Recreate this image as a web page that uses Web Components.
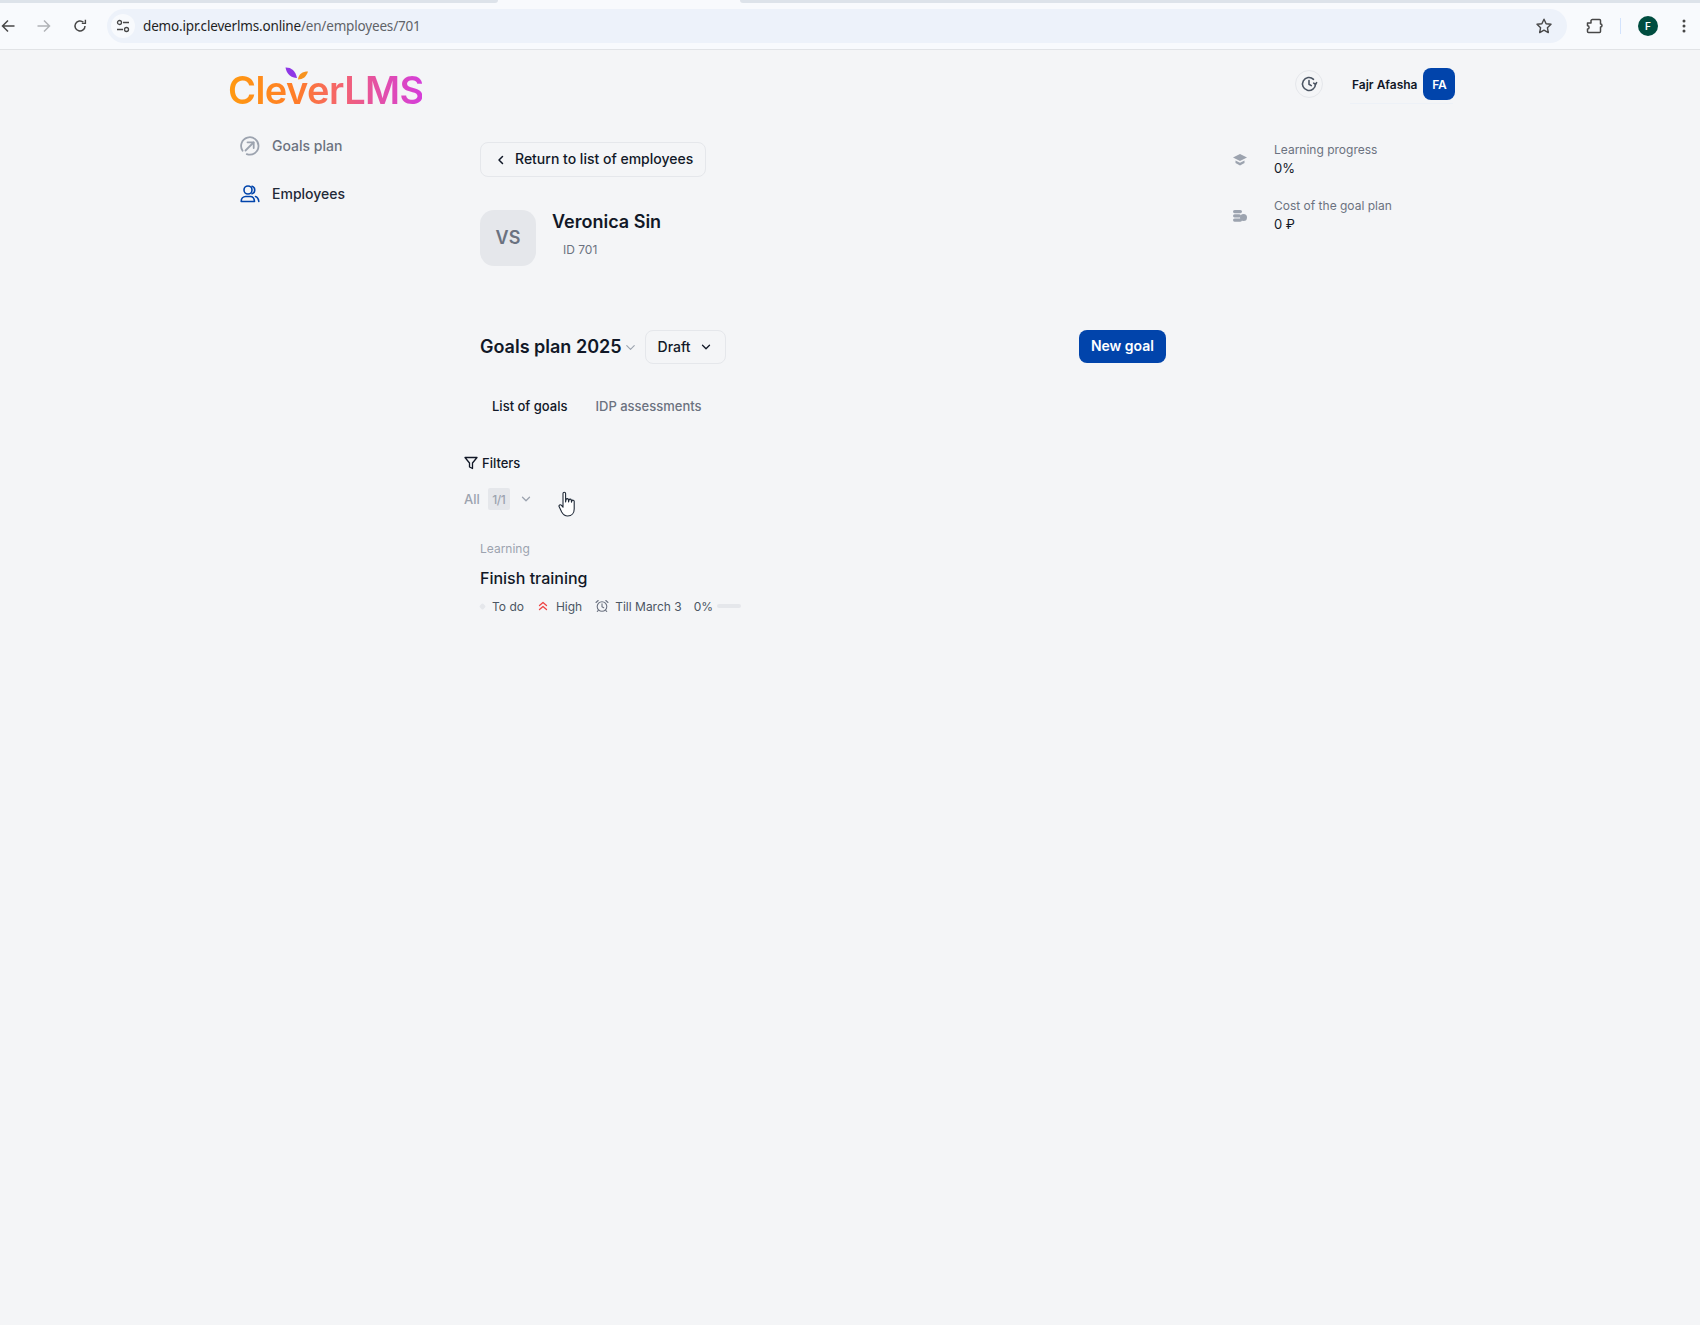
<!DOCTYPE html>
<html lang="en">
<head>
<meta charset="utf-8">
<title>CleverLMS</title>
<style>
  html, body { margin: 0; height: 100%; background: #f4f5f7; }
  body { font-family: Inter, "Liberation Sans", sans-serif; color: #111827; }
</style>
</head>
<body>
<browser-bar url="demo.ipr.cleverlms.online/en/employees/701"></browser-bar>
<app-page>
  <clever-logo slot="logo"></clever-logo>
  <user-menu slot="user" name="Fajr Afasha" initials="FA"></user-menu>

  <side-nav slot="nav">
    <nav-item icon="goals">Goals plan</nav-item>
    <nav-item icon="people" active>Employees</nav-item>
  </side-nav>

  <back-button>Return to list of employees</back-button>
  <employee-head name="Veronica Sin" initials="VS" code="ID 701"></employee-head>
  <plan-head title="Goals plan 2025" status="Draft" action="New goal"></plan-head>
  <goal-tabs></goal-tabs>
  <goal-filters></goal-filters>
  <goal-card kind="Learning" name="Finish training"></goal-card>

  <stat-item slot="aside" icon="cap" label="Learning progress" value="0%"></stat-item>
  <stat-item slot="aside" icon="coins" label="Cost of the goal plan" value="0 ₽"></stat-item>
</app-page>

<script>
  const chevron = (size, color, width = 1.5) => `
    <svg width="${size}" height="${size}" viewBox="0 0 16 16" fill="none" stroke="${color}" stroke-width="${width}" stroke-linecap="round" stroke-linejoin="round"><path d="M4 6l4 4 4-4"/></svg>`;

  class BrowserBar extends HTMLElement {
    constructor() {
      super();
      this.shadowDOM = this.attachShadow({ mode: 'open' });
    }

    connectedCallback() {
      this.shadowDOM.innerHTML = `
        <style>
          :host {
            display: block;
            height: 50px;
            box-sizing: border-box;
            background: #f8fafd;
            border-bottom: 1px solid #e1e3e6;
            font-family: "Noto Sans", "Liberation Sans", sans-serif;
          }
          .tabs {
            display: flex;
            height: 3px;
          }
          .tabs i {
            background: #dde3ea;
            flex: 0 0 498px;
            border-bottom-right-radius: 6px;
          }
          .tabs i + b { flex: 0 0 242px; }
          .tabs i:last-child {
            flex: 1;
            border-bottom-right-radius: 0;
            border-bottom-left-radius: 6px;
          }
          .row {
            display: flex;
            align-items: center;
            height: 34px;
            margin-top: 6px;
          }
          .nav {
            display: flex;
            align-items: center;
            flex: 0 0 107px;
          }
          .pill {
            flex: 0 0 1460px;
            height: 34px;
            display: flex;
            align-items: center;
            box-sizing: border-box;
            background: #edf2fa;
            border-radius: 17px;
            padding: 0 14px 0 4px;
          }
          .tune {
            width: 24px;
            height: 24px;
            border-radius: 50%;
            background: #f8fafd;
            display: flex;
            align-items: center;
            justify-content: center;
            margin-right: 8px;
          }
          .url {
            font-size: 13.5px;
            letter-spacing: -0.17px;
            color: #5f6368;
            flex: 1;
          }
          .url b { font-weight: 400; color: #1f1f1f; }
          .tools {
            display: flex;
            align-items: center;
            flex: 1;
          }
          .sep {
            width: 1px;
            height: 16px;
            background: #d3e3fd;
            margin: 0 17px 0 17px;
          }
          .profile {
            width: 20px;
            height: 20px;
            border-radius: 50%;
            background: #004d40;
            color: #fff;
            font: 600 10px Inter, sans-serif;
            display: flex;
            align-items: center;
            justify-content: center;
          }
        </style>
        <div class="tabs"><i></i><b></b><i></i></div>
        <div class="row">
          <div class="nav">
            <svg style="margin-left:1px" width="14" height="14" viewBox="0 0 14 14" fill="none" stroke="#474747" stroke-width="1.5"><path d="M13.5 7H2M7 1.5L1.5 7 7 12.5"/></svg>
            <svg style="margin-left:22px" width="14" height="14" viewBox="0 0 14 14" fill="none" stroke="#b0b3b7" stroke-width="1.5"><path d="M.5 7H12M7 1.5L12.5 7 7 12.5"/></svg>
            <svg style="margin-left:22px" width="14" height="14" viewBox="0 0 14 14" fill="none" stroke="#474747" stroke-width="1.5"><path d="M12 7a5 5 0 1 1-1.6-3.7"/><path d="M12.4 .8v3.6H8.8" stroke-width="1.4"/></svg>
          </div>
          <div class="pill">
            <span class="tune">
              <svg width="14" height="14" viewBox="0 0 14 14" fill="none" stroke="#474747" stroke-width="1.3"><circle cx="3.5" cy="3.5" r="2"/><path d="M7 3.5h6M1 10.5h6"/><circle cx="10.5" cy="10.5" r="2"/></svg>
            </span>
            <span class="url">${this.styledUrl()}</span>
            <svg width="18" height="18" viewBox="0 0 18 18" fill="none" stroke="#474747" stroke-width="1.4" stroke-linejoin="round"><path d="M9 2.2l2.1 4.5 4.9.6-3.6 3.4.9 4.9L9 13.2l-4.3 2.4.9-4.9L2 7.3l4.9-.6z"/></svg>
          </div>
          <div class="tools">
            <svg style="margin-left:18px" width="18" height="18" viewBox="0 0 18 18" fill="none" stroke="#474747" stroke-width="1.5" stroke-linejoin="round"><path d="M2.5 6H6V3.5A1.5 1.5 0 0 1 7.5 2.5H14.5a1 1 0 0 1 1 1V7a1.4 1.4 0 0 1 0 3v4.5a1 1 0 0 1-1 1H3.5a1 1 0 0 1-1-1V12a1.6 1.6 0 0 0 0-3.2z"/></svg>
            <span class="sep"></span>
            <span class="profile">F</span>
            <svg style="margin-left:24px" width="4" height="14" viewBox="0 0 4 14" fill="#474747"><circle cx="2" cy="2" r="1.5"/><circle cx="2" cy="7" r="1.5"/><circle cx="2" cy="12" r="1.5"/></svg>
          </div>
        </div>
      `;
    }

    styledUrl() {
      const url = this.getAttribute('url');
      const cut = url.indexOf('/');
      return `<b>${url.slice(0, cut)}</b>${url.slice(cut)}`;
    }
  }

  class CleverLogo extends HTMLElement {
    constructor() {
      super();
      this.shadowDOM = this.attachShadow({ mode: 'open' });
    }

    connectedCallback() {
      this.shadowDOM.innerHTML = `
        <style>
          :host {
            display: block;
            position: relative;
            width: 193px;
            height: 46px;
          }
          .word {
            display: block;
            font: 600 38px/46px Inter, sans-serif;
            letter-spacing: -0.55px;
            white-space: nowrap;
            margin-left: -1px;
            background: linear-gradient(90deg, #ff9a10 0%, #ff7d28 35%, #f4646f 58%, #e350a8 78%, #d53ed9 100%);
            -webkit-background-clip: text;
            background-clip: text;
            color: transparent;
          }
          svg {
            position: absolute;
            left: 56px;
            top: 0;
          }
        </style>
        <span class="word">CleverLMS</span>
        <svg width="24" height="14" viewBox="0 0 24 14">
          <path d="M.5 .5C6 .3 10.5 3.5 12 11 6.500 11 1.500 7 .5 .5z" fill="#8f37e6"/>
          <path d="M13 12.500C13.500 7 17.500 4.500 23 4.500 21.500 9.500 18 12.500 13 12.500z" fill="#f7931e"/>
        </svg>
      `;
    }
  }

  class UserMenu extends HTMLElement {
    constructor() {
      super();
      this.shadowDOM = this.attachShadow({ mode: 'open' });
    }

    connectedCallback() {
      this.shadowDOM.innerHTML = `
        <style>
          :host {
            display: flex;
            align-items: center;
            white-space: nowrap;
          }
          .history {
            flex: none;
            width: 28px;
            height: 28px;
            box-sizing: border-box;
            border: 1px solid #e5e7eb;
            border-radius: 50%;
            display: flex;
            align-items: center;
            justify-content: center;
            margin-right: 29px;
          }
          .who {
            position: relative;
            display: flex;
            align-items: center;
            gap: 6px;
          }
          .who::after {
            content: "";
            position: absolute;
            left: -2px;
            right: 2px;
            bottom: -4px;
            height: 1px;
            background: #edf1f7;
          }
          .name {
            font-size: 12px;
            font-weight: 600;
            color: #111827;
          }
          .badge {
            flex: none;
            width: 32px;
            height: 32px;
            border-radius: 8px;
            background: #0144ab;
            color: #fff;
            font-size: 12px;
            font-weight: 600;
            display: flex;
            align-items: center;
            justify-content: center;
          }
        </style>
        <span class="history">
          <svg width="18" height="18" viewBox="0 0 18 18" fill="none" stroke="#4b5563" stroke-width="1.6" stroke-linecap="round" stroke-linejoin="round">
            <path d="M15.500 9A6.500 6.500 0 1 1 13.500 4.300"/><path d="M16.600 7.600L15.500 9.400 13.700 8.200"/><path d="M9 5.500V9.300l2.300 1.300"/>
          </svg>
        </span>
        <span class="who">
          <span class="name">${this.getAttribute('name')}</span>
          <span class="badge">${this.getAttribute('initials')}</span>
        </span>
      `;
    }
  }

  class SideNav extends HTMLElement {
    constructor() {
      super();
      this.attachShadow({ mode: 'open' }).innerHTML = `
        <style>
          :host {
            display: flex;
            flex-direction: column;
            gap: 24px;
            padding: 0 0 0 11px;
          }
        </style>
        <slot></slot>
      `;
    }
  }

  const navIcons = {
    goals: `<svg width="20" height="20" viewBox="0 0 20 20" fill="none" stroke="#9ca3af" stroke-width="1.8" stroke-linecap="round" stroke-linejoin="round">
        <path d="M2.600 14.800A8.700 8.700 0 1 1 6.800 18.100"/><path d="M5.500 14.500L13.500 6.500"/><path d="M7.500 6.300h6.200V12"/></svg>`,
    people: `<svg width="20" height="20" viewBox="0 0 20 20" fill="none" stroke="#0144ab" stroke-width="1.6" stroke-linecap="round" stroke-linejoin="round">
        <circle cx="8" cy="6" r="4"/><path d="M1.200 17.500c0-3 2-5 4.500-5h4.600c2.500 0 4 1.700 4.200 5z"/><path d="M12 2.200a4 4 0 0 1 0 7.600"/><path d="M15.500 12.500c2 .6 3 2.500 3.300 5"/></svg>`
  };

  class NavItem extends HTMLElement {
    constructor() {
      super();
      this.shadowDOM = this.attachShadow({ mode: 'open' });
    }

    connectedCallback() {
      this.shadowDOM.innerHTML = `
        <style>
          :host {
            display: flex;
            align-items: center;
            gap: 12px;
            height: 24px;
            font-size: 14px;
            font-weight: 500;
            color: #6b7280;
          }
          :host([active]) { color: #1f2937; }
          span { display: block; margin-top: -2px; }
        </style>
        ${navIcons[this.getAttribute('icon')]}
        <span><slot></slot></span>
      `;
    }
  }

  class BackButton extends HTMLElement {
    constructor() {
      super();
      this.attachShadow({ mode: 'open' }).innerHTML = `
        <style>
          :host {
            display: inline-flex;
            align-items: center;
            align-self: flex-start;
            height: 35px;
            box-sizing: border-box;
            padding: 0 12px 0 12px;
            gap: 8px;
            border: 1px solid #e5e7eb;
            border-radius: 8px;
            font-size: 14px;
            font-weight: 500;
            color: #111827;
          }
          span { display: block; margin-top: -2px; }
        </style>
        <svg style="margin-left:1px;margin-right:-1px" width="14" height="14" viewBox="0 0 14 14" fill="none" stroke="#111827" stroke-width="1.500" stroke-linecap="round" stroke-linejoin="round"><path d="M8.500 3.500L5 7l3.500 3.500"/></svg>
        <span><slot></slot></span>
      `;
    }
  }

  class EmployeeHead extends HTMLElement {
    constructor() {
      super();
      this.shadowDOM = this.attachShadow({ mode: 'open' });
    }

    connectedCallback() {
      this.shadowDOM.innerHTML = `
        <style>
          :host {
            display: flex;
            gap: 16px;
            margin-top: 33px;
          }
          .avatar {
            width: 56px;
            height: 56px;
            box-sizing: border-box;
            padding-bottom: 2px;
            border-radius: 14px;
            background: #e5e7eb;
            color: #6b7280;
            font-size: 18px;
            font-weight: 600;
            display: flex;
            align-items: center;
            justify-content: center;
          }
          .name {
            font-size: 18px;
            line-height: 24px;
            font-weight: 600;
            color: #111827;
          }
          .code {
            margin: 8px 0 0 11px;
            font-size: 12px;
            line-height: 16px;
            color: #6b7280;
          }
        </style>
        <div class="avatar">${this.getAttribute('initials')}</div>
        <div>
          <div class="name">${this.getAttribute('name')}</div>
          <div class="code">${this.getAttribute('code')}</div>
        </div>
      `;
    }
  }

  class PlanHead extends HTMLElement {
    constructor() {
      super();
      this.shadowDOM = this.attachShadow({ mode: 'open' });
    }

    connectedCallback() {
      this.shadowDOM.innerHTML = `
        <style>
          :host {
            display: flex;
            align-items: center;
            margin-top: 64px;
            height: 34px;
          }
          .title {
            font-size: 18px;
            font-weight: 600;
            color: #111827;
            padding-bottom: 2px;
          }
          .title-arrow {
            display: flex;
            margin: 0 7px 0 1px;
          }
          .status {
            display: flex;
            align-items: center;
            gap: 8px;
            height: 34px;
            box-sizing: border-box;
            padding: 0 12px;
            border: 1px solid #e5e7eb;
            border-radius: 8px;
            font-size: 14px;
            font-weight: 500;
          }
          .status span { margin-top: -2px; }
          .status svg { display: block; }
          .action {
            margin-left: auto;
            align-self: flex-start;
            height: 33px;
            box-sizing: border-box;
            padding: 0 12px 2px;
            display: flex;
            align-items: center;
            background: #0144ab;
            color: #fff;
            border-radius: 8px;
            font-size: 14px;
            font-weight: 600;
          }
        </style>
        <span class="title">${this.getAttribute('title')}</span>
        <span class="title-arrow">${chevron(15, '#9ca3af', 1.2)}</span>
        <span class="status"><span>${this.getAttribute('status')}</span>${chevron(14, '#111827')}</span>
        <span class="action">${this.getAttribute('action')}</span>
      `;
    }
  }

  class GoalTabs extends HTMLElement {
    constructor() {
      super();
      this.attachShadow({ mode: 'open' }).innerHTML = `
        <style>
          :host {
            display: flex;
            gap: 28px;
            align-items: center;
            height: 32px;
            margin-top: 26px;
            padding-left: 12px;
            font-size: 13px;
            font-weight: 500;
            color: #6b7280;
          }
          .on { color: #111827; }
        </style>
        <span class="on">List of goals</span>
        <span>IDP assessments</span>
      `;
    }
  }

  class GoalFilters extends HTMLElement {
    constructor() {
      super();
      this.attachShadow({ mode: 'open' }).innerHTML = `
        <style>
          :host {
            display: block;
            position: relative;
            margin: 31px 0 0 -16px;
          }
          .title {
            display: flex;
            align-items: center;
            gap: 4px;
            height: 20px;
            font-size: 13px;
            font-weight: 500;
            color: #111827;
          }
          .select {
            display: flex;
            align-items: center;
            height: 22px;
            margin-top: 15px;
            font-size: 13px;
            font-weight: 500;
            color: #9ca3af;
          }
          .count {
            margin-left: 8px;
            width: 22px;
            height: 22px;
            display: flex;
            align-items: center;
            justify-content: center;
            background: #e5e7eb;
            border-radius: 2px;
            font-size: 12px;
            letter-spacing: -0.5px;
          }
          .arrow {
            display: flex;
            margin-left: 9px;
          }
          .cursor {
            position: absolute;
            left: 94px;
            top: 38px;
          }
        </style>
        <div class="title">
          <svg width="14" height="14" viewBox="0 0 14 14" fill="none" stroke="#111827" stroke-width="1.300" stroke-linejoin="round"><path d="M1 1.500h12L8.500 7v5.500l-3-1.500V7z"/></svg>
          Filters
        </div>
        <div class="select">
          All
          <span class="count">1/1</span>
          <span class="arrow">${chevron(14, '#9ca3af')}</span>
        </div>
        <svg class="cursor" width="20" height="26" viewBox="0 0 20 26" fill="#fff" stroke="#1f2937" stroke-width="1.100" stroke-linejoin="round">
          <path d="M5 2.500a1.300 1.300 0 0 1 2.600 0V11l.5-2.500a1.200 1.200 0 0 1 2.300 0l.2 2.500.4-2a1.200 1.200 0 0 1 2.300 0l.2 2.200.4-1.300a1.200 1.200 0 0 1 2.300 .4V18c0 4-2.400 7-6.500 7-3.200 0-4.700-1.600-6-4L1.200 15.800c-.8-1.500 1.200-2.800 2.300-1.500L5 16.200z"/>
        </svg>
      `;
    }
  }

  class GoalCard extends HTMLElement {
    constructor() {
      super();
      this.shadowDOM = this.attachShadow({ mode: 'open' });
    }

    connectedCallback() {
      this.shadowDOM.innerHTML = `
        <style>
          :host {
            display: block;
            margin-top: 31px;
          }
          .kind {
            font-size: 12px;
            line-height: 16px;
            color: #9ca3af;
          }
          .name {
            margin-top: 9px;
            font-size: 16px;
            line-height: 24px;
            font-weight: 500;
            color: #111827;
          }
          .meta {
            display: flex;
            align-items: center;
            height: 16px;
            margin-top: 8px;
            font-size: 12px;
            color: #4b5563;
          }
          .dot {
            width: 5px;
            height: 5px;
            border-radius: 1.500px;
            background: #e5e7eb;
            transform: rotate(45deg);
            margin-right: 7px;
          }
          .bar {
            width: 24px;
            height: 4px;
            border-radius: 2px;
            background: #e5e7eb;
            margin-left: 4px;
          }
        </style>
        <div class="kind">${this.getAttribute('kind')}</div>
        <div class="name">${this.getAttribute('name')}</div>
        <div class="meta">
          <span class="dot"></span>
          <span>To do</span>
          <svg style="margin:0 8px 0 14px" width="10" height="10" viewBox="0 0 10 10" fill="none" stroke="#ef4444" stroke-width="1.300" stroke-linecap="round" stroke-linejoin="round"><path d="M1.500 4.500L5 1.500l3.500 3M1.500 8.500L5 5.500l3.500 3"/></svg>
          <span>High</span>
          <svg style="margin:0 6px 0 13px" width="14" height="14" viewBox="0 0 14 14" fill="none" stroke="#6b7280" stroke-width="1.100" stroke-linecap="round" stroke-linejoin="round"><circle cx="7" cy="7.500" r="4.800"/><path d="M7 4.800v2.900l1.700 1M1 3.500L3.200 1.500M13 3.500l-2.200-2M3.300 11.300l-1 1.200M10.700 11.300l1 1.200"/></svg>
          <span>Till March 3</span>
          <span style="margin-left:12px">0%</span>
          <span class="bar"></span>
        </div>
      `;
    }
  }

  const statIcons = {
    cap: `<svg width="14" height="12" viewBox="0 0 14 12" fill="#9ca3af"><path d="M7 0l7 3.500L7 7 0 3.500z"/><path d="M2.500 6.500L7 8.800l4.500-2.300V9L7 11.500 2.500 9z"/></svg>`,
    coins: `<svg width="14" height="12" viewBox="0 0 14 12" fill="#9ca3af"><rect x="0" y="0" width="9" height="3.200" rx="1.600"/><rect x="0" y="4.200" width="8" height="3.200" rx="1.600"/><rect x="0" y="8.500" width="9" height="3.200" rx="1.600"/><circle cx="10.500" cy="7.500" r="3.500"/></svg>`
  };

  class StatItem extends HTMLElement {
    constructor() {
      super();
      this.shadowDOM = this.attachShadow({ mode: 'open' });
    }

    connectedCallback() {
      this.shadowDOM.innerHTML = `
        <style>
          :host {
            display: flex;
            align-items: center;
            gap: 27px;
          }
          .label {
            font-size: 12px;
            line-height: 16px;
            color: #6b7280;
          }
          .value {
            font-size: 13px;
            line-height: 20px;
            color: #111827;
          }
          .icon { display: flex; }
        </style>
        <span class="icon">${statIcons[this.getAttribute('icon')]}</span>
        <div>
          <div class="label">${this.getAttribute('label')}</div>
          <div class="value">${this.getAttribute('value')}</div>
        </div>
      `;
    }
  }

  class AppPage extends HTMLElement {
    constructor() {
      super();
      this.attachShadow({ mode: 'open' }).innerHTML = `
        <style>
          :host {
            display: grid;
            grid-template-columns: 251px 686px 67px 222px;
            grid-template-rows: 92px auto;
            padding-left: 229px;
            min-height: 1275px;
            box-sizing: border-box;
            align-content: start;
          }
          .logo { grid-column: 1 / 3; padding-top: 17px; }
          .user { grid-column: 3 / 5; padding: 18px 0 0 0; margin-left: 129px; }
          .nav { margin-top: -8px; }
          main {
            display: flex;
            flex-direction: column;
          }
          .aside {
            grid-column: 4;
            display: flex;
            flex-direction: column;
            gap: 20px;
          }
        </style>
        <div class="logo"><slot name="logo"></slot></div>
        <div class="user"><slot name="user"></slot></div>
        <div class="nav"><slot name="nav"></slot></div>
        <main><slot></slot></main>
        <div class="aside"><slot name="aside"></slot></div>
      `;
    }
  }

  customElements.define('browser-bar', BrowserBar);
  customElements.define('clever-logo', CleverLogo);
  customElements.define('user-menu', UserMenu);
  customElements.define('side-nav', SideNav);
  customElements.define('nav-item', NavItem);
  customElements.define('back-button', BackButton);
  customElements.define('employee-head', EmployeeHead);
  customElements.define('plan-head', PlanHead);
  customElements.define('goal-tabs', GoalTabs);
  customElements.define('goal-filters', GoalFilters);
  customElements.define('goal-card', GoalCard);
  customElements.define('stat-item', StatItem);
  customElements.define('app-page', AppPage);
</script>
</body>
</html>
